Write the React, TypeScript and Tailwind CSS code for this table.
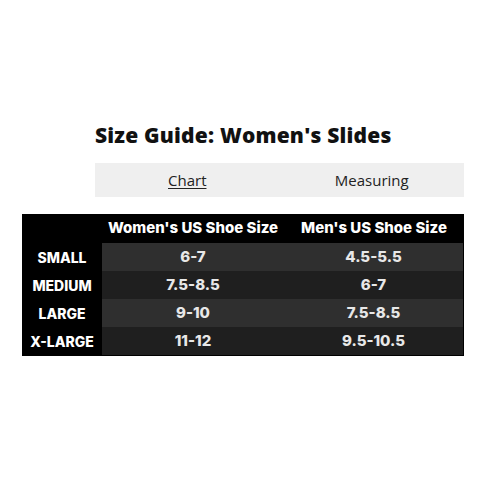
import React from "react";

const rows = [
  ["SMALL", "6-7", "4.5-5.5"],
  ["MEDIUM", "7.5-8.5", "6-7"],
  ["LARGE", "9-10", "7.5-8.5"],
  ["X-LARGE", "11-12", "9.5-10.5"],
];

export default function App() {
  return (
    <div className="w-[483px] h-[483px] bg-white relative">
      <div className="pt-[121px] pl-[95px] pr-[19px]">
        <h1 className="text-[21px] leading-[28px] tracking-[0.2px] font-extrabold text-[#111] [font-family:'Open_Sans',sans-serif]">
          Size Guide: Women's Slides
        </h1>
        <div className="mt-[14px] h-[34px] bg-[#efefef] flex text-[15px] text-[#222] [font-family:'Open_Sans',sans-serif]">
          <div className="flex-1 flex items-center justify-center">
            <span className="underline underline-offset-2">Chart</span>
          </div>
          <div className="flex-1 flex items-center justify-center">Measuring</div>
        </div>
      </div>
      <div className="mt-[17px] ml-[22px] w-[442px] bg-black [font-family:Inter,sans-serif] font-extrabold text-[15px]">
        <div className="flex h-[29px] items-center text-white">
          <div className="w-[80px]" />
          <div className="w-[182px] text-center">Women's US Shoe Size</div>
          <div className="flex-1 text-center">Men's US Shoe Size</div>
        </div>
        {rows.map((r, i) => (
          <div key={r[0]} className="flex h-[28px] text-white">
            <div className="w-[80px] flex items-center justify-center bg-black text-[14px]">{r[0]}</div>
            <div
              className={`flex-1 flex items-center mr-[1px] ${i % 2 === 0 ? "bg-[#2f2f2f]" : "bg-[#1f1f1f]"} text-[#e8e8e8]`}
            >
              <div className="w-[182px] text-center">{r[1]}</div>
              <div className="flex-1 text-center">{r[2]}</div>
            </div>
          </div>
        ))}
        <div className="h-[1px]" />
      </div>
    </div>
  );
}
